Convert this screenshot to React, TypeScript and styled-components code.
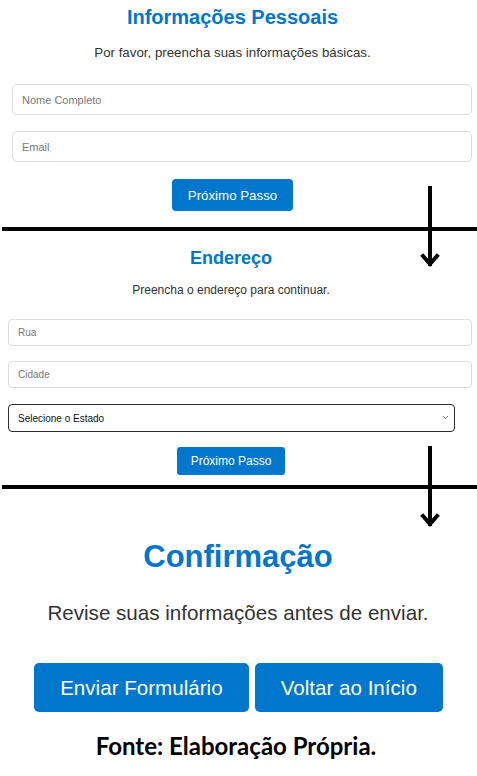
import React from "react";
import styled, { createGlobalStyle } from "styled-components";
import { ChevronDown } from "lucide-react";

const Global = createGlobalStyle`
  html, body { margin: 0; padding: 0; background: #fff; }
  body { font-family: "Liberation Sans", Arial, sans-serif; }
  * { box-sizing: border-box; }
`;

const BLUE = "#0077cc";

const Page = styled.div`
  position: relative;
  width: 477px;
  height: 776px;
  overflow: hidden;
  background: #fff;
`;

const Step = styled.section<{ $pl: number; $pr: number; $top: number; $shift: number }>`
  display: flex;
  flex-direction: column;
  align-items: center;
  padding: ${(p) => p.$top}px ${(p) => p.$pr}px 0 ${(p) => p.$pl}px;
  --shift: ${(p) => p.$shift}px;
`;

const Title = styled.h2<{ $size: number; $lh: number }>`
  margin: 0 var(--shift) 0 0;
  font-size: ${(p) => p.$size}px;
  line-height: ${(p) => p.$lh}px;
  font-weight: 700;
  color: ${BLUE};
  text-align: center;
`;

const Lead = styled.p<{ $size: number; $lh: number; $mt: number }>`
  margin: ${(p) => p.$mt}px var(--shift) 0 0;
  font-size: ${(p) => p.$size}px;
  line-height: ${(p) => p.$lh}px;
  color: #333;
  text-align: center;
`;

const Field = styled.input<{ $h: number; $mt: number; $fs: number; $r: number }>`
  display: block;
  width: 100%;
  height: ${(p) => p.$h}px;
  margin: ${(p) => p.$mt}px 0 0;
  padding: 0 9px;
  border: 1px solid #dcdcdc;
  border-radius: ${(p) => p.$r}px;
  font-family: "Liberation Sans", Arial, sans-serif;
  font-size: ${(p) => p.$fs}px;
  color: #333;
  background: #fff;
  outline: none;
  &::placeholder { color: #777; }
`;

const SelectWrap = styled.div<{ $mt: number }>`
  position: relative;
  align-self: stretch;
  margin: ${(p) => p.$mt}px 17px 0 0;
`;

const Select = styled.select`
  display: block;
  width: 100%;
  height: 28px;
  padding: 0 9px;
  border: 1.5px solid #2b2b2b;
  border-radius: 4px;
  font-family: "Liberation Sans", Arial, sans-serif;
  font-size: 10px;
  color: #111;
  background: #fff;
  appearance: none;
  outline: none;
`;

const Chevron = styled.span`
  position: absolute;
  right: 5px;
  top: 9px;
  display: flex;
  color: #333;
  pointer-events: none;
`;

const Button = styled.button<{ $h: number; $mt: number; $fs: number; $px: number; $r: number }>`
  height: ${(p) => p.$h}px;
  margin: ${(p) => p.$mt}px var(--shift) 0 0;
  padding: 0 ${(p) => p.$px}px;
  border: none;
  border-radius: ${(p) => p.$r}px;
  background: ${BLUE};
  color: #fff;
  font-family: "Liberation Sans", Arial, sans-serif;
  font-size: ${(p) => p.$fs}px;
  white-space: nowrap;
  cursor: pointer;
`;

const ButtonRow = styled.div`
  display: flex;
  justify-content: center;
  gap: 6px;
  margin-top: 38px;
  --shift: 0px;
`;

const Divider = styled.hr<{ $mt: number }>`
  margin: ${(p) => p.$mt}px 0 0 2px;
  height: 4px;
  border: none;
  background: #000;
`;

const Caption = styled.p`
  margin: 20px 5px 0 0;
  font-family: Lato, "Open Sans", sans-serif;
  font-weight: 700;
  font-size: 24px;
  line-height: 28px;
  color: #000;
  text-align: center;
`;

const Arrow = styled.svg<{ $top: number }>`
  position: absolute;
  left: 420px;
  top: ${(p) => p.$top}px;
`;

function DownArrow({ top }: { top: number }) {
  return (
    <Arrow $top={top} width="22" height="84" viewBox="0 0 22 84">
      <line x1="10" y1="0" x2="10" y2="80" stroke="#000" strokeWidth="4" />
      <polyline
        points="3,70 10,78 17,70"
        fill="none"
        stroke="#000"
        strokeWidth="4"
        strokeLinecap="square"
      />
    </Arrow>
  );
}

export default function App() {
  return (
    <>
      <Global />
      <Page>
        <Step $pl={12} $pr={5} $top={5} $shift={19}>
          <Title $size={20} $lh={24}>Informações Pessoais</Title>
          <Lead $size={13.3} $lh={16} $mt={16}>
            Por favor, preencha suas informações básicas.
          </Lead>
          <Field $h={31} $mt={23} $fs={11} $r={5} placeholder="Nome Completo" />
          <Field $h={31} $mt={16} $fs={11} $r={5} placeholder="Email" />
          <Button $h={32} $mt={17} $fs={13.3} $px={16} $r={4}>Próximo Passo</Button>
        </Step>
        <Divider $mt={16} />
        <Step $pl={8} $pr={5} $top={16} $shift={18}>
          <Title $size={18} $lh={22}>Endereço</Title>
          <Lead $size={12} $lh={14} $mt={14}>
            Preencha o endereço para continuar.
          </Lead>
          <Field $h={27} $mt={22} $fs={10} $r={4} placeholder="Rua" />
          <Field $h={27} $mt={15} $fs={10} $r={4} placeholder="Cidade" />
          <SelectWrap $mt={16}>
            <Select defaultValue="">
              <option value="">Selecione o Estado</option>
            </Select>
            <Chevron>
              <ChevronDown size={9} strokeWidth={2} />
            </Chevron>
          </SelectWrap>
          <Button $h={28} $mt={15} $fs={12} $px={14} $r={3}>Próximo Passo</Button>
        </Step>
        <Divider $mt={10} />
        <Step $pl={0} $pr={0} $top={50} $shift={1}>
          <Title $size={31} $lh={36}>Confirmação</Title>
          <Lead $size={20.6} $lh={24} $mt={26}>
            Revise suas informações antes de enviar.
          </Lead>
          <ButtonRow>
            <Button $h={49} $mt={0} $fs={20.6} $px={26} $r={5}>Enviar Formulário</Button>
            <Button $h={49} $mt={0} $fs={20.6} $px={26} $r={5}>Voltar ao Início</Button>
          </ButtonRow>
          <Caption>Fonte: Elaboração Própria.</Caption>
        </Step>
        <DownArrow top={186} />
        <DownArrow top={446} />
      </Page>
    </>
  );
}
